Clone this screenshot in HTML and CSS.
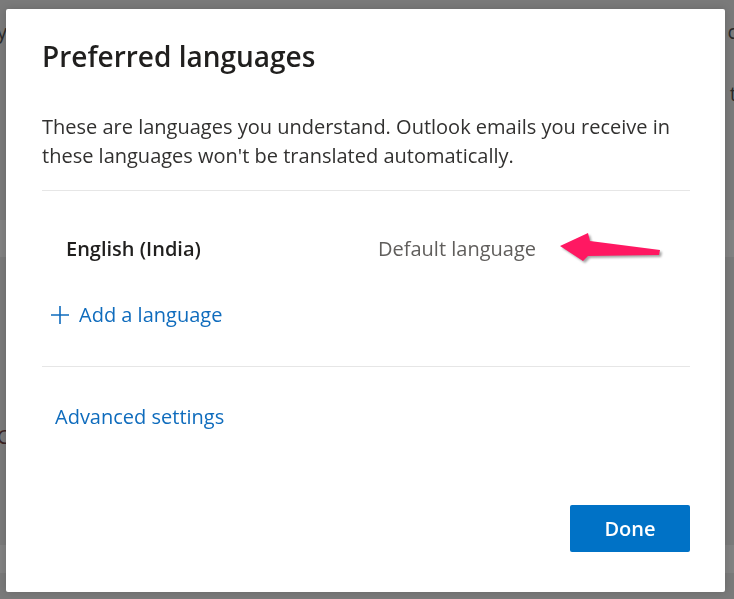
FILE: index.html
```html
<!DOCTYPE html>
<html lang="en">
<head>
  <meta charset="UTF-8">
  <meta name="viewport" content="width=device-width, initial-scale=1.0">
  <title>Preferred languages</title>
  <link rel="stylesheet" href="styles.css">
</head>
<body>

<div class="backdrop">
  <div class="bg-row bg-top"><span>y</span><span>c</span></div>
  <div class="bg-row bg-mid"><span></span><span>t</span></div>
  <div class="bg-band"></div>
  <div class="bg-row bg-low"><span>C</span><span></span></div>
  <div class="bg-band bg-band-bottom"></div>
</div>

<div class="dialog">
  <h2 class="dialog-title">Preferred languages</h2>
  <p class="dialog-text">These are languages you understand. Outlook emails you receive in these languages won't be translated automatically.</p>

  <div class="divider"></div>

  <div class="lang-row">
    <span class="lang-name">English (India)</span>
    <span class="lang-default">Default language</span>
    <svg class="arrow" width="110" height="40" viewBox="0 0 110 40">
      <polygon points="5,18 33,5 35,13 105,22 104,27 33,28 28,33" fill="#ff1862"/>
    </svg>
  </div>

  <a class="add-link" href="#">
    <svg width="22" height="22" viewBox="0 0 22 22">
      <path d="M11 2v18M2 11h18" stroke="#0f6cbd" stroke-width="1.6" fill="none"/>
    </svg>
    <span>Add a language</span>
  </a>

  <div class="divider divider-2"></div>

  <a class="advanced-link" href="#">Advanced settings</a>

  <div class="dialog-footer">
    <button class="btn-done">Done</button>
  </div>
</div>

</body>
</html>
```

FILE: styles.css
```css
body {
  margin: 0;
  height: 599px;
  overflow: hidden;
  background-color: #7a7a7a;
  font-family: "Open Sans", "Noto Sans", sans-serif;
}
.backdrop {
  display: flex;
  flex-direction: column;
  color: #2a2a2a;
  font-size: 20px;
}
.bg-row {
  display: flex;
  justify-content: space-between;
  margin: 0 -3px;
  height: 40px;
}
.bg-top {
  padding-top: 18px;
}
.bg-mid {
  padding-top: 22px;
  height: 60px;
}
.bg-low {
  padding-top: 6px;
  height: 280px;
  align-items: flex-start;
}
.bg-band {
  height: 37px;
  margin-top: 80px;
  background-color: #828282;
}
.bg-band-bottom {
  margin-top: 2px;
  height: 28px;
}
.bg-low span:first-child {
  margin-top: 160px;
  color: #3a2222;
}
.dialog {
  position: fixed;
  left: 6px;
  top: 9px;
  width: 719px;
  height: 583px;
  box-sizing: border-box;
  padding: 0 35px 0 36px;
  background-color: #fff;
  border-radius: 2px;
  box-shadow: 0 0 8px rgba(0, 0, 0, 0.15);
  display: flex;
  flex-direction: column;
  color: #323130;
}
.dialog-title {
  margin: 27px 0 0;
  font-size: 28px;
  font-weight: 600;
  line-height: 40px;
  color: #201f1e;
}
.dialog-text {
  margin: 36px 0 0;
  font-size: 20px;
  line-height: 29px;
}
.divider {
  height: 1px;
  margin-top: 20px;
  background-color: #e6e6e6;
}
.lang-row {
  display: flex;
  align-items: center;
  height: 38px;
  margin-top: 38px;
  padding-left: 24px;
}
.lang-name {
  width: 312px;
  font-size: 20px;
  font-weight: 600;
  color: #201f1e;
}
.lang-default {
  font-size: 20px;
  color: #605e5c;
}
.arrow {
  margin-left: 19px;
  filter: drop-shadow(2px 2px 1px rgba(0, 0, 0, 0.35));
}
.add-link {
  display: flex;
  align-items: center;
  gap: 8px;
  margin-top: 34px;
  padding-left: 7px;
  font-size: 20px;
  color: #0f6cbd;
  text-decoration: none;
}
.divider-2 {
  margin-top: 38px;
}
.advanced-link {
  margin-top: 36px;
  padding-left: 13px;
  font-size: 20px;
  color: #0f6cbd;
  text-decoration: none;
  align-self: flex-start;
}
.dialog-footer {
  display: flex;
  justify-content: flex-end;
  margin-top: auto;
  padding-bottom: 40px;
}
.btn-done {
  width: 120px;
  height: 47px;
  border: none;
  border-radius: 2px;
  background-color: #0072c6;
  color: #fff;
  font-family: inherit;
  font-size: 20px;
  font-weight: 600;
  cursor: pointer;
}
```
